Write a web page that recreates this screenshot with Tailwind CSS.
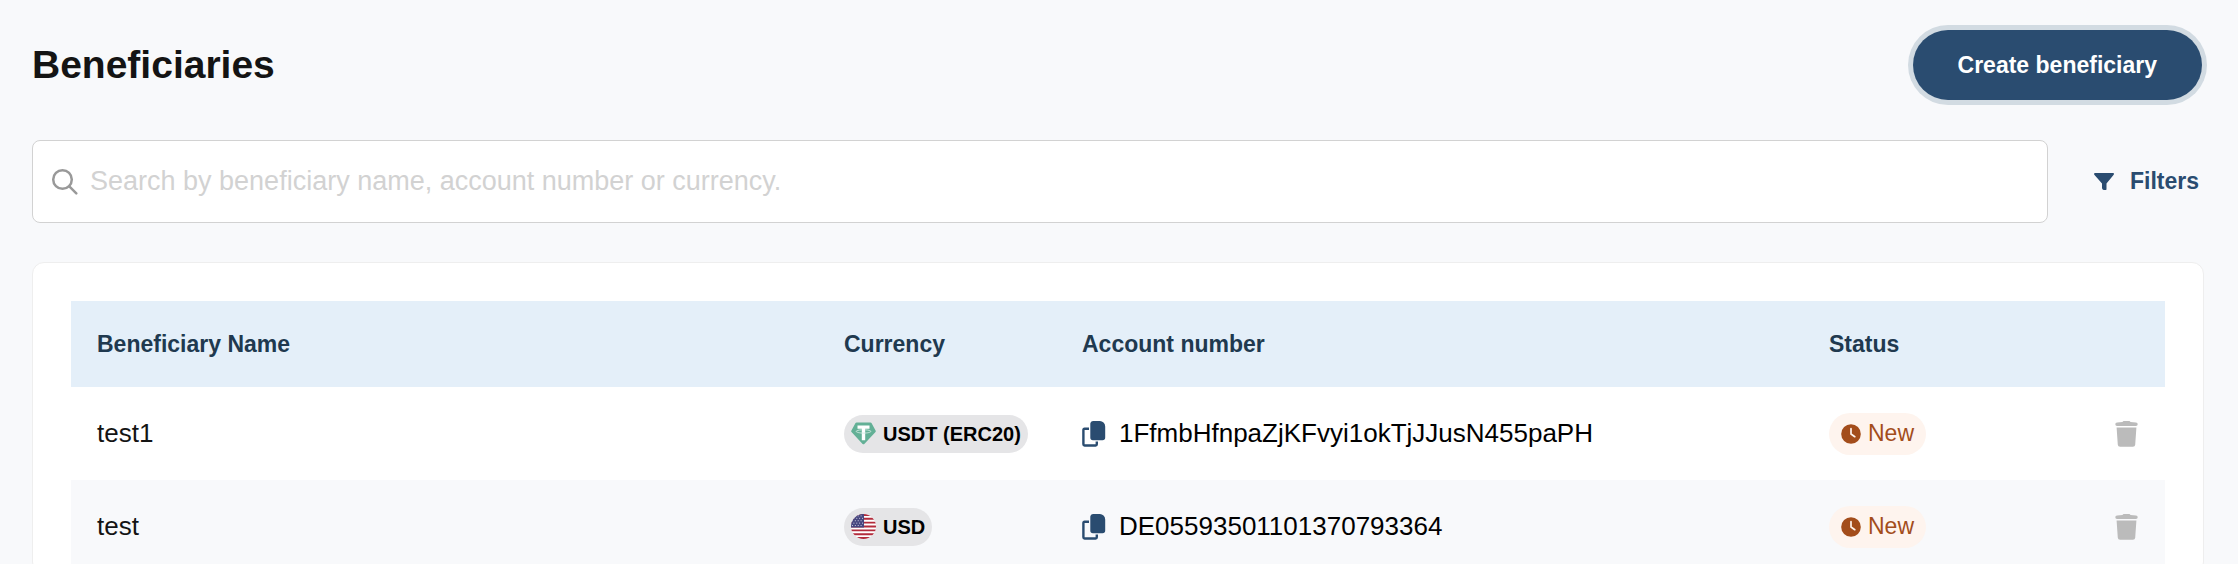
<!DOCTYPE html>
<html lang="en">
  <head>
    <meta charset="UTF-8" />
    <meta name="viewport" content="width=device-width, initial-scale=1.0" />
    <title>Beneficiaries</title>
    <script src="https://cdn.jsdelivr.net/npm/@tailwindcss/browser@4"></script>
  </head>
  <body class="h-screen overflow-hidden bg-[#f8f9fb] font-['Liberation_Sans',Arial,sans-serif] text-[#141414]">
    <!-- icons shared by the table rows -->
    <svg class="hidden" aria-hidden="true">
      <symbol id="icon-copy" viewBox="0 0 24 26">
        <path fill="currentColor" d="M11 0h6.500a5.500 5.500 0 0 1 5.700 5.500V16.500a2.700 2.700 0 0 1-2.700 2.700H11a2.700 2.700 0 0 1-2.700-2.700v-14A2.700 2.700 0 0 1 11 0z" />
        <path fill="currentColor" d="M3 6.600h4V9H2.600v14.300h11V20.600H16v2.700a2.400 2.400 0 0 1-2.400 2.400H2.600A2.400 2.400 0 0 1 .2 23.300V9.200A2.600 2.600 0 0 1 3 6.600z" />
      </symbol>
      <symbol id="icon-clock" viewBox="0 0 20 20">
        <circle cx="10" cy="10" r="9.800" fill="currentColor" />
        <path d="M10 4.700V10l3.800 2.700" fill="none" stroke="#fef4ee" stroke-width="1.700" stroke-linecap="round" stroke-linejoin="round" />
      </symbol>
      <symbol id="icon-trash" viewBox="0 0 23 26">
        <path fill="currentColor" d="M7.500 1c.3-.6.700-.9 1.300-.9h5.400c.6 0 1 .3 1.300.9l5.500.6a1.700 1.700 0 0 1 0 3.400H2a1.700 1.700 0 0 1 0-3.400z" />
        <path fill="currentColor" d="M1.600 6.600h19.800l-1.200 17.100a2.300 2.300 0 0 1-2.300 2.100H5.100a2.300 2.300 0 0 1-2.300-2.100z" />
      </symbol>
    </svg>

    <header class="flex items-center justify-between pt-[30px] pr-9 pl-8">
      <h1 class="text-[39px] leading-[70px] font-bold">Beneficiaries</h1>
      <button type="button" class="h-[70px] rounded-full bg-[#2a4c70] px-[45px] text-[23px] font-bold text-white ring-5 ring-[#d2dbe2]">
        Create beneficiary
      </button>
    </header>

    <main class="pt-10 pr-[34px] pl-8">
      <div class="flex items-center">
        <label class="flex h-[83px] flex-1 items-center gap-3 rounded-lg border border-[#d2d2d2] bg-white px-[18px]">
          <svg class="size-[27px] text-[#999]" viewBox="0 0 27 27" fill="none" stroke="currentColor" stroke-width="2.500" stroke-linecap="round">
            <circle cx="11.500" cy="11.500" r="9.300" />
            <path d="M18.300 18.300l7 7" />
          </svg>
          <input type="text" aria-label="Search beneficiaries" class="min-w-0 flex-1 text-[27px] outline-none placeholder:text-[#d2d2d2]" placeholder="Search by beneficiary name, account number or currency." />
        </label>
        <button type="button" class="ml-[46px] mr-[5px] flex items-center gap-4 text-[23px] font-bold text-[#2a4c70]">
          <svg class="h-[17px] w-5" viewBox="0 0 20 17" fill="currentColor">
            <path d="M1 0h18c.9 0 1.200 1 .7 1.700L12.500 10.500v5.700c0 .6-.5.900-1.100.8h-1.500c-1.200-.3-1.900-1-1.900-2.200v-4.300L.3 1.700C-.2 1 .1 0 1 0z" />
          </svg>
          Filters
        </button>
      </div>

      <section class="mt-[39px] rounded-xl border border-[#eeeeee] bg-white px-[38px] pt-[38px]">
        <table class="w-full table-fixed text-left">
          <colgroup>
            <col />
            <col class="w-[238px]" />
            <col />
            <col class="w-[238px]" />
            <col class="w-[124px]" />
          </colgroup>
          <thead class="bg-[#e4eff9] text-[23px] text-[#20394f]">
            <tr class="h-[86px]">
              <th class="px-[26px]">Beneficiary Name</th>
              <th class="px-[26px]">Currency</th>
              <th class="px-[26px]">Account number</th>
              <th class="px-[26px]">Status</th>
              <th aria-label="Actions"></th>
            </tr>
          </thead>
          <tbody class="text-[26px]">
            <tr class="h-[93px]">
              <td class="px-[26px]">test1</td>
              <td class="pl-[26px]">
                <span class="flex h-[38px] w-fit items-center gap-[7px] rounded-full bg-[#e5e5e7] px-[7px] text-[20px] font-bold whitespace-nowrap text-black">
                  <svg class="size-[25px]" viewBox="0 0 25 25">
                    <path fill="#63b096" d="M5.600 1.500h13.800c.5 0 .9.200 1.100.6l4.200 7.600c.2.500.1 1-.2 1.400L13.300 22.900c-.5.500-1.200.5-1.700 0L.5 11.100C.1 10.700 0 10.200.3 9.700l4.200-7.600c.2-.4.600-.6 1.100-.6z" />
                    <path fill="#fff" d="M6.500 4.500h12v3.200h-4.300v11.500h-3.400V7.700H6.500z" />
                    <path fill="none" stroke="#d5ebe3" stroke-width=".9" d="M10.800 8.800c-3.300.2-5.600.8-5.600 1.600s3.300 1.700 7.300 1.700 7.300-.8 7.300-1.700-2.300-1.400-5.600-1.600" />
                  </svg>
                  USDT (ERC20)
                </span>
              </td>
              <td class="px-[26px] text-black">
                <div class="flex items-center gap-[13px]">
                  <button type="button" aria-label="Copy account number" class="text-[#2a4c70]">
                    <svg class="h-[26px] w-6"><use href="#icon-copy" /></svg>
                  </button>
                  1FfmbHfnpaZjKFvyi1okTjJJusN455paPH
                </div>
              </td>
              <td class="px-[26px]">
                <span class="flex h-[42px] w-fit items-center gap-[7px] rounded-full bg-[#fef4ee] px-3 text-[23px] text-[#a34d1b]">
                  <svg class="size-5"><use href="#icon-clock" /></svg>
                  New
                </span>
              </td>
              <td class="pr-[27px]">
                <button type="button" aria-label="Delete beneficiary" class="ml-auto block text-[#bbb]">
                  <svg class="h-[26px] w-[23px]"><use href="#icon-trash" /></svg>
                </button>
              </td>
            </tr>
            <tr class="h-[93px] bg-[#f8f9fb]">
              <td class="px-[26px]">test</td>
              <td class="pl-[26px]">
                <span class="flex h-[38px] w-fit items-center gap-[7px] rounded-full bg-[#e5e5e7] px-[7px] text-[20px] font-bold whitespace-nowrap text-black">
                  <svg class="size-[25px]" viewBox="0 0 26 26">
                    <clipPath id="flag"><circle cx="13" cy="13" r="13" /></clipPath>
                    <g clip-path="url(#flag)">
                      <path fill="#fff" d="M0 0h26v26H0z" />
                      <path stroke="#b22c3c" stroke-width="2" d="M0 1h26M0 5h26M0 9h26M0 13h26M0 17h26M0 21h26M0 25h26" />
                      <path fill="#46467f" d="M0 0h13.500v14H0z" />
                      <path stroke="#d8d8e8" stroke-width="1" stroke-dasharray="1 2" d="M1 2h12M2.500 4.500h10.500M1 7h12M2.500 9.500h10.500M1 12h12" />
                    </g>
                  </svg>
                  USD
                </span>
              </td>
              <td class="px-[26px] text-black">
                <div class="flex items-center gap-[13px]">
                  <button type="button" aria-label="Copy account number" class="text-[#2a4c70]">
                    <svg class="h-[26px] w-6"><use href="#icon-copy" /></svg>
                  </button>
                  DE05593501101370793364
                </div>
              </td>
              <td class="px-[26px]">
                <span class="flex h-[42px] w-fit items-center gap-[7px] rounded-full bg-[#fef4ee] px-3 text-[23px] text-[#a34d1b]">
                  <svg class="size-5"><use href="#icon-clock" /></svg>
                  New
                </span>
              </td>
              <td class="pr-[27px]">
                <button type="button" aria-label="Delete beneficiary" class="ml-auto block text-[#bbb]">
                  <svg class="h-[26px] w-[23px]"><use href="#icon-trash" /></svg>
                </button>
              </td>
            </tr>
          </tbody>
        </table>
      </section>
    </main>
  </body>
</html>
